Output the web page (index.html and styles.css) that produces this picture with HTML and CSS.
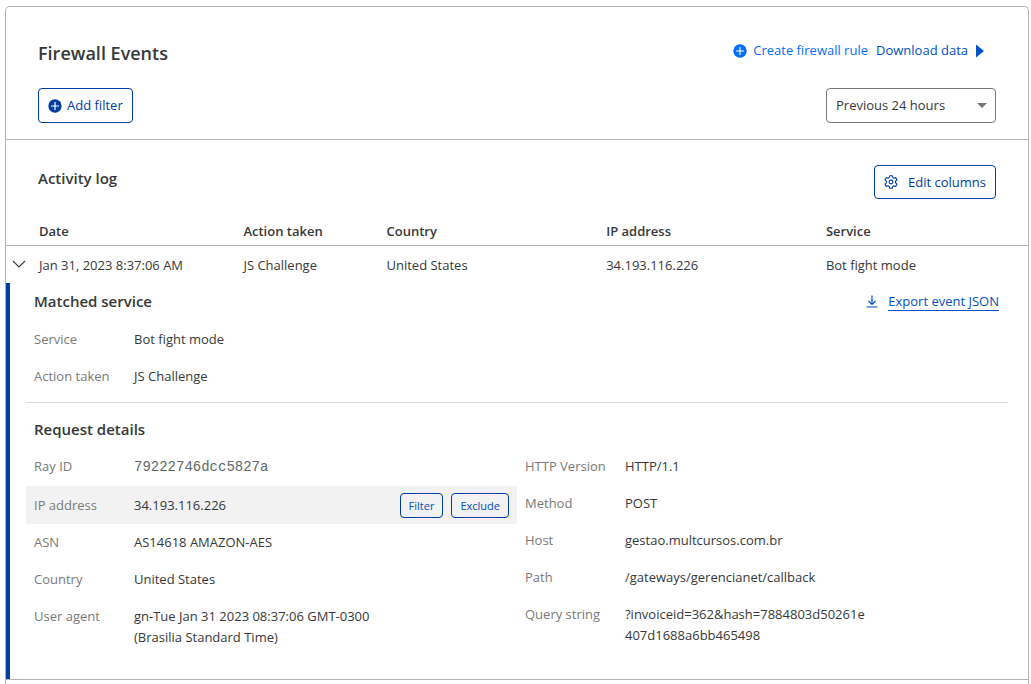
FILE: index.html
```html
<!DOCTYPE html>
<html lang="en">
<head>
<meta charset="utf-8">
<title>Firewall Events</title>
<link rel="stylesheet" href="styles.css">
</head>
<body>
<main class="card">
  <header class="card-header">
    <div class="bar title-bar">
      <h1 class="title">Firewall Events</h1>
      <nav class="links">
        <a class="link link-bright" href="#create"><svg class="icon-plus" viewBox="0 0 14 14"><circle cx="7" cy="7" r="6.7" fill="currentColor"/><path d="M7 3v8M3 7h8" stroke="#fff" stroke-width="1.2"/></svg>Create firewall rule</a>
        <a class="link" href="#download">Download data<svg class="icon-play" viewBox="0 0 8 14"><path d="M0 0.5L8 7L0 13.5z" fill="currentColor"/></svg></a>
      </nav>
    </div>
    <div class="bar">
      <button class="button" type="button"><svg class="icon-plus" viewBox="0 0 14 14"><circle cx="7" cy="7" r="6.7" fill="currentColor"/><path d="M7 3v8M3 7h8" stroke="#fff" stroke-width="1.2"/></svg>Add filter</button>
      <div class="select-wrap">
        <select class="select" aria-label="Time range"><option>Previous 24 hours</option></select>
        <svg class="select-arrow" viewBox="0 0 10 5"><path d="M0 0h10L5 5z" fill="currentColor"/></svg>
      </div>
    </div>
  </header>

  <section>
    <div class="bar log-bar">
      <h2 class="heading log-heading">Activity log</h2>
      <button class="button button-columns" type="button"><svg class="icon-gear" viewBox="0 0 14 14" fill="none" stroke="currentColor" stroke-width="1.1" stroke-linejoin="round"><path d="M5.7 0.7h2.6l.4 1.8 1.2.7 1.8-.6 1.3 2.2-1.4 1.3v1.8l1.4 1.3-1.3 2.2-1.8-.6-1.2.7-.4 1.8H5.7l-.4-1.8-1.2-.7-1.8.6L1 9.200l1.400-1.300V6.100L1 4.800l1.300-2.200 1.800.6 1.200-.7z"/><circle cx="7" cy="7" r="1.900"/></svg>Edit columns</button>
    </div>
    <table class="log">
      <colgroup><col class="col-toggle"><col class="col-date"><col class="col-action"><col class="col-country"><col class="col-ip"><col></colgroup>
      <thead>
        <tr><td></td><th scope="col">Date</th><th scope="col">Action taken</th><th scope="col">Country</th><th scope="col">IP address</th><th scope="col">Service</th></tr>
      </thead>
      <tbody>
        <tr class="event">
          <td><button class="toggle" type="button" aria-label="Collapse event" aria-expanded="true"><svg class="icon-chevron" viewBox="0 0 14 8"><path d="M1 1l6 6 6-6" fill="none" stroke="currentColor" stroke-width="1.1"/></svg></button></td>
          <td>Jan 31, 2023 8:37:06 AM</td><td>JS Challenge</td><td>United States</td><td>34.193.116.226</td><td>Bot fight mode</td>
        </tr>
        <tr>
          <td class="detail" colspan="6">
            <div class="bar detail-bar">
              <h3 class="heading">Matched service</h3>
              <a class="export" href="#export"><svg class="icon-download" viewBox="0 0 12 13"><path d="M6 0.500v9M2.500 6L6 9.500 9.500 6M0.500 12h11" fill="none" stroke="currentColor" stroke-width="1.200"/></svg><span class="export-text">Export event JSON</span></a>
            </div>
            <dl class="facts matched">
              <div class="fact"><dt>Service</dt><dd>Bot fight mode</dd></div>
              <div class="fact"><dt>Action taken</dt><dd>JS Challenge</dd></div>
            </dl>
            <h3 class="heading request-heading">Request details</h3>
            <div class="columns">
              <dl class="facts">
                <div class="fact"><dt>Ray ID</dt><dd class="mono">79222746dcc5827a</dd></div>
                <div class="fact active"><dt>IP address</dt><dd>34.193.116.226</dd><dd class="actions"><button class="button button-small" type="button">Filter</button><button class="button button-small" type="button">Exclude</button></dd></div>
                <div class="fact"><dt>ASN</dt><dd>AS14618 AMAZON-AES</dd></div>
                <div class="fact"><dt>Country</dt><dd>United States</dd></div>
                <div class="fact"><dt>User agent</dt><dd>gn-Tue Jan 31 2023 08:37:06 GMT-0300 (Brasilia Standard Time)</dd></div>
              </dl>
              <dl class="facts">
                <div class="fact"><dt>HTTP Version</dt><dd>HTTP/1.1</dd></div>
                <div class="fact"><dt>Method</dt><dd>POST</dd></div>
                <div class="fact"><dt>Host</dt><dd>gestao.multcursos.com.br</dd></div>
                <div class="fact"><dt>Path</dt><dd>/gateways/gerencianet/callback</dd></div>
                <div class="fact"><dt>Query string</dt><dd class="break">?invoiceid=362&amp;hash=7884803d50261e407d1688a6bb465498</dd></div>
              </dl>
            </div>
          </td>
        </tr>
      </tbody>
    </table>
  </section>
</main>
</body>
</html>
```
FILE: styles.css
```css
* { box-sizing: border-box; }

body {
  margin: 0;
  padding: 6px 2px 0 5px;
  background: #fff;
  color: #36393a;
  font: 13px/21px "Open Sans", "Noto Sans", sans-serif;
}

h1, h2, h3, dl, dd { margin: 0; }

svg { display: block; flex: none; }

.card {
  padding-bottom: 4px;
  border: 1px solid #b3b3b3;
  border-bottom: 0;
  border-radius: 5px 5px 0 0;
}

.card-header {
  padding: 29px 32px 16px;
  border-bottom: 1px solid #b3b3b3;
}

.bar {
  display: flex;
  justify-content: space-between;
  align-items: center;
}

.title-bar { align-items: flex-start; margin-bottom: 18px; }

.title { font-size: 18px; line-height: 34px; font-weight: 600; }

.heading { font-size: 15px; line-height: 24px; font-weight: 600; }

.log-heading { line-height: 26px; }

.links { display: flex; gap: 8px; padding: 4px 12px 0 0; }

.link {
  display: flex;
  align-items: center;
  gap: 8px;
  color: #0051c3;
  text-decoration: none;
}

.link-bright { gap: 6px; color: #056dff; }

.icon-plus { width: 14px; height: 14px; }
.icon-play { width: 8px; height: 14px; }
.icon-gear { width: 14px; height: 14px; }
.icon-chevron { width: 14px; height: 8px; }
.icon-download { width: 12px; height: 13px; }

.button {
  display: flex;
  align-items: center;
  gap: 5px;
  height: 35px;
  padding: 0 9px;
  border: 1px solid #003da1;
  border-radius: 4px;
  background: #fff;
  color: #003da1;
  font: inherit;
}

.button-columns { gap: 10px; height: 34px; }

.button-small {
  height: 25px;
  padding: 0 8px;
  background: transparent;
  color: #0051c3;
  font-size: 11px;
}

.select-wrap { position: relative; width: 170px; }

.select {
  width: 100%;
  height: 35px;
  padding: 0 9px;
  border: 1px solid #797979;
  border-radius: 4px;
  background: #fff;
  color: #36393a;
  font: inherit;
  appearance: none;
}

.select-arrow {
  position: absolute;
  top: 15px;
  right: 9px;
  width: 10px;
  height: 5px;
  color: #72777b;
  pointer-events: none;
}

.log-bar { align-items: flex-start; padding: 25px 32px 18px; }

.log {
  width: 100%;
  border-collapse: separate;
  border-spacing: 0;
  border-bottom: 1px solid #b3b3b3;
  table-layout: fixed;
}

.col-toggle { width: 29px; }
.col-date { width: 20%; }
.col-action { width: 14%; }
.col-country { width: 21.5%; }
.col-ip { width: 21.5%; }

.log th, .log td { padding: 4px; text-align: left; }

.log thead th, .log thead td {
  padding-bottom: 3px;
  border-bottom: 1px solid #b3b3b3;
  font-weight: 600;
}

.log .event td { padding: 9px 4px 7px; }

.toggle {
  display: flex;
  padding: 0 2px 4px;
  border: 0;
  background: none;
  color: #36393a;
}

.log .detail {
  padding: 6px 20px 23px 16px;
  border-left: 4px solid #003da1;
}

.detail-bar { padding: 0 9px 0 8px; }

.export {
  display: flex;
  align-items: center;
  gap: 10px;
  color: #0051c3;
  text-decoration: none;
}

.export-text { line-height: 18px; border-bottom: 1px solid #0051c3; }

.matched {
  padding: 8px 0 7px;
  border-bottom: 1px solid #d9d9d9;
}

.request-heading { padding: 14px 8px 7px; }

.columns { display: grid; grid-template-columns: 1fr 1fr; }

.fact {
  display: grid;
  grid-template-columns: 100px 1fr 111px;
  padding: 8px;
}

.fact dt { color: #797979; }

.active { align-items: center; padding: 7px 8px 6px; background: #f2f2f2; }

.actions { display: flex; gap: 8px; justify-content: flex-end; }

.mono {
  padding-top: 1px;
  color: #62676a;
  font-family: "Liberation Mono", monospace;
  font-size: 14px;
}

.break { padding-right: 20px; word-break: break-all; }
```
